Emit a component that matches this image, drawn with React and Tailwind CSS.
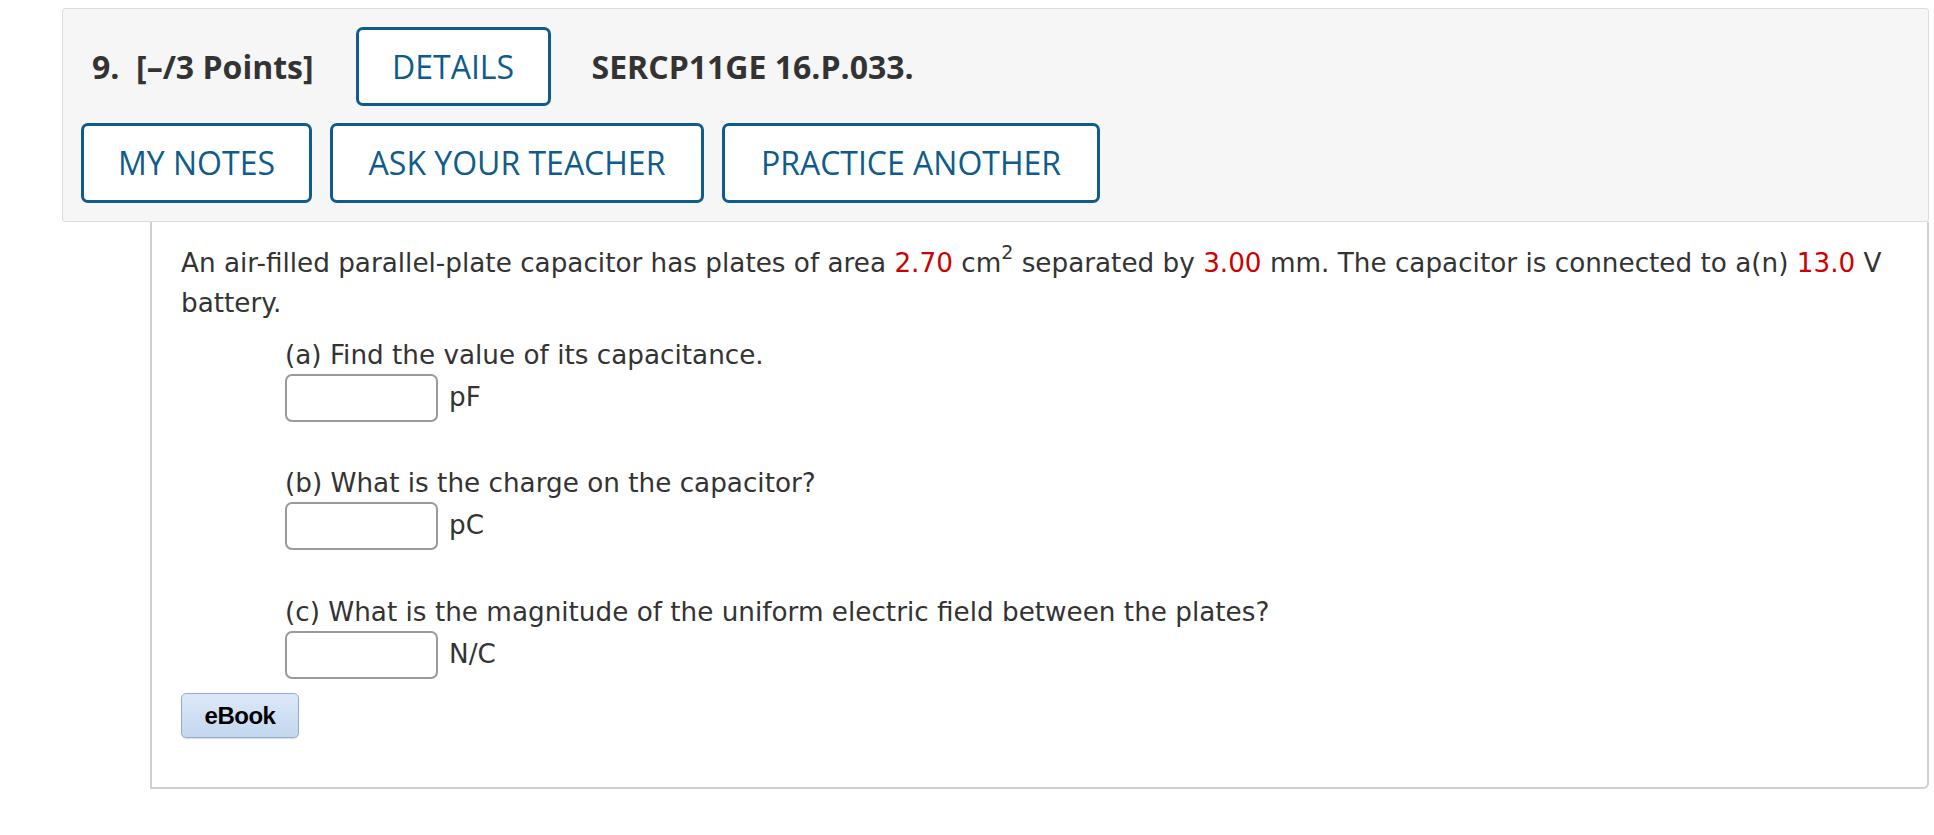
import React from 'react';

const headFont = { fontFamily: '"Open Sans", "Liberation Sans", sans-serif' };

function OutlineBtn({ children, className = '' }) {
  return (
    <div
      className={`flex items-center justify-center border-[3px] border-[#0f5c8c] rounded-[7px] bg-white text-[#0f5c8c] text-[32px] ${className}`}
    >
      {children}
    </div>
  );
}

function Part({ label, unit, className = '' }) {
  return (
    <div className={`ml-[104px] ${className}`}>
      <div className="leading-[30px]">{label}</div>
      <div className="flex items-center mt-[4px]">
        <div className="w-[153px] h-[48px] rounded-[7px] border-2 border-[#9a9a9a] bg-white" />
        <span className="ml-[11px]">{unit}</span>
      </div>
    </div>
  );
}

export default function App() {
  return (
    <div className="w-full h-[835px] bg-white pt-[8px]">
      {/* question header */}
      <div
        className="ml-[62px] w-[1867px] h-[214px] bg-[#f6f6f6] border border-[#dcdcdc] rounded-[3px] px-[18px] pt-[18px]"
        style={headFont}
      >
        <div className="flex items-center h-[79px]">
          <span className="ml-[11px] text-[32px] font-bold text-[#333] whitespace-pre">9.  [–/3 Points]</span>
          <OutlineBtn className="ml-[42px] w-[195px] h-[79px]">DETAILS</OutlineBtn>
          <span className="ml-[41px] text-[32px] font-bold text-[#333]">SERCP11GE 16.P.033.</span>
        </div>
        <div className="flex gap-[18px] mt-[17px]">
          <OutlineBtn className="w-[231px] h-[80px]">MY NOTES</OutlineBtn>
          <OutlineBtn className="w-[374px] h-[80px]">ASK YOUR TEACHER</OutlineBtn>
          <OutlineBtn className="w-[378px] h-[80px]">PRACTICE ANOTHER</OutlineBtn>
        </div>
      </div>

      {/* question body */}
      <div
        className="ml-[150px] w-[1779px] h-[567px] border-x-2 border-b-2 border-[#d0d0d0] rounded-br-[6px] pl-[29px] pr-[20px] pt-[21px] text-[26.25px] text-[#333]"
        style={{ fontFamily: 'Verdana, "DejaVu Sans", sans-serif' }}
      >
        <p className="leading-[40px]">
          An air-filled parallel-plate capacitor has plates of area{' '}
          <span className="text-[#cc0000]">2.70</span> cm
          <sup className="text-[19px] leading-none relative top-[-13px]">2</sup> separated by{' '}
          <span className="text-[#cc0000]">3.00</span> mm. The capacitor is connected to a(n){' '}
          <span className="text-[#cc0000]">13.0</span> V battery.
        </p>

        <Part className="mt-[17px]" label="(a) Find the value of its capacitance." unit="pF" />
        <Part className="mt-[46px]" label="(b) What is the charge on the capacitor?" unit="pC" />
        <Part
          className="mt-[47px]"
          label="(c) What is the magnitude of the uniform electric field between the plates?"
          unit="N/C"
        />

        <div
          className="mt-[14px] w-[118px] h-[45px] flex items-center justify-center rounded-[5px] border border-[#8fb0d6] bg-gradient-to-b from-[#dde9f8] to-[#c3d7ef] text-black font-bold text-[24px] tracking-[-0.5px] shadow-[0_1px_1px_rgba(0,0,0,0.15)]"
          style={{ fontFamily: '"Liberation Sans", Arial, sans-serif' }}
        >
          eBook
        </div>
      </div>
    </div>
  );
}
